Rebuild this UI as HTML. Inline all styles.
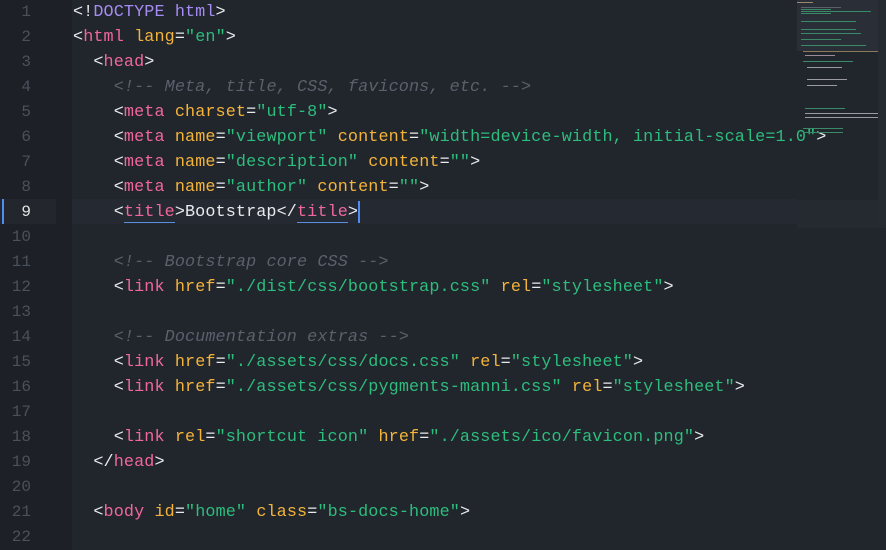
<!DOCTYPE html>
<html><head><style>
body{margin:0;width:886px;height:550px;overflow:hidden;background:#21252c;font-family:"Liberation Mono",monospace;}
#gut{position:absolute;left:0;top:0;width:72px;height:550px;background:#1d2026;}
.ln{position:absolute;left:0;width:31px;text-align:right;color:#4b515c;font-size:16px;height:25px;line-height:25px;}
.cl{position:absolute;left:73px;white-space:pre;font-size:16.8px;letter-spacing:0.11px;height:25px;line-height:25px;color:#e8eaee;}
.t{color:#f0679e}.a{color:#f4b43a}.s{color:#2dbd7d}.d{color:#a48cf2}.c{color:#5a616c;font-style:italic}
#mm{position:absolute;left:797px;top:0;width:89px;height:550px;}
.m{position:absolute;height:1px;}
</style></head><body>
<div id="gut"></div>
<div style="position:absolute;left:0;top:199px;width:56px;height:25px;background:#23262d"></div>
<div style="position:absolute;left:72px;top:199px;width:725px;height:25px;background:#252931"></div>
<div style="position:absolute;left:2px;top:199px;width:2px;height:25px;background:#4d8ef0"></div>
<div class="ln" style="top:0px">1</div><div class="ln" style="top:25px">2</div><div class="ln" style="top:50px">3</div><div class="ln" style="top:75px">4</div><div class="ln" style="top:100px">5</div><div class="ln" style="top:125px">6</div><div class="ln" style="top:150px">7</div><div class="ln" style="top:175px">8</div><div class="ln" style="top:200px;color:#e6e6e6">9</div><div class="ln" style="top:225px">10</div><div class="ln" style="top:250px">11</div><div class="ln" style="top:275px">12</div><div class="ln" style="top:300px">13</div><div class="ln" style="top:325px">14</div><div class="ln" style="top:350px">15</div><div class="ln" style="top:375px">16</div><div class="ln" style="top:400px">17</div><div class="ln" style="top:425px">18</div><div class="ln" style="top:450px">19</div><div class="ln" style="top:475px">20</div><div class="ln" style="top:500px">21</div><div class="ln" style="top:525px">22</div>
<div class="cl" style="top:0px">&lt;!<span class="d">DOCTYPE html</span>&gt;</div>
<div class="cl" style="top:25px">&lt;<span class="t">html</span> <span class="a">lang</span>=<span class="s">"en"</span>&gt;</div>
<div class="cl" style="top:50px">  &lt;<span class="t">head</span>&gt;</div>
<div class="cl" style="top:75px">    <span class="c">&lt;!-- Meta, title, CSS, favicons, etc. --&gt;</span></div>
<div class="cl" style="top:100px">    &lt;<span class="t">meta</span> <span class="a">charset</span>=<span class="s">"utf-8"</span>&gt;</div>
<div class="cl" style="top:125px">    &lt;<span class="t">meta</span> <span class="a">name</span>=<span class="s">"viewport"</span> <span class="a">content</span>=<span class="s">"width=device-width, initial-scale=1.0"</span>&gt;</div>
<div class="cl" style="top:150px">    &lt;<span class="t">meta</span> <span class="a">name</span>=<span class="s">"description"</span> <span class="a">content</span>=<span class="s">""</span>&gt;</div>
<div class="cl" style="top:175px">    &lt;<span class="t">meta</span> <span class="a">name</span>=<span class="s">"author"</span> <span class="a">content</span>=<span class="s">""</span>&gt;</div>
<div class="cl" style="top:200px">    &lt;<span class="t" style="border-bottom:1px solid #5a8de0">title</span>&gt;Bootstrap&lt;/<span class="t" style="border-bottom:1px solid #5a8de0">title</span>&gt;<span style="display:inline-block;width:2px;height:22px;background:#4d8ef0;vertical-align:middle"></span></div>
<div class="cl" style="top:250px">    <span class="c">&lt;!-- Bootstrap core CSS --&gt;</span></div>
<div class="cl" style="top:275px">    &lt;<span class="t">link</span> <span class="a">href</span>=<span class="s">"./dist/css/bootstrap.css"</span> <span class="a">rel</span>=<span class="s">"stylesheet"</span>&gt;</div>
<div class="cl" style="top:325px">    <span class="c">&lt;!-- Documentation extras --&gt;</span></div>
<div class="cl" style="top:350px">    &lt;<span class="t">link</span> <span class="a">href</span>=<span class="s">"./assets/css/docs.css"</span> <span class="a">rel</span>=<span class="s">"stylesheet"</span>&gt;</div>
<div class="cl" style="top:375px">    &lt;<span class="t">link</span> <span class="a">href</span>=<span class="s">"./assets/css/pygments-manni.css"</span> <span class="a">rel</span>=<span class="s">"stylesheet"</span>&gt;</div>
<div class="cl" style="top:425px">    &lt;<span class="t">link</span> <span class="a">rel</span>=<span class="s">"shortcut icon"</span> <span class="a">href</span>=<span class="s">"./assets/ico/favicon.png"</span>&gt;</div>
<div class="cl" style="top:450px">  &lt;/<span class="t">head</span>&gt;</div>
<div class="cl" style="top:500px">  &lt;<span class="t">body</span> <span class="a">id</span>=<span class="s">"home"</span> <span class="a">class</span>=<span class="s">"bs-docs-home"</span>&gt;</div>
<div id="mm">
<div style="position:absolute;left:0;top:0;width:89px;height:51px;background:#2a2e36"></div>
<div style="position:absolute;left:0;top:200px;width:89px;height:28px;background:#252930"></div>
<div class="m" style="left:0;top:2px;width:16px;background:#a08870"></div>
<div class="m" style="left:4px;top:7px;width:40px;background:#5a616c"></div>
<div class="m" style="left:4px;top:9px;width:30px;background:#3a8a6a"></div>
<div class="m" style="left:4px;top:11px;width:70px;background:#3a8a6a"></div>
<div class="m" style="left:4px;top:13px;width:30px;background:#3a8a6a"></div>
<div class="m" style="left:4px;top:21px;width:55px;background:#3a8a6a"></div>
<div class="m" style="left:4px;top:29px;width:55px;background:#3a8a6a"></div>
<div class="m" style="left:4px;top:33px;width:60px;background:#3a8a6a"></div>
<div class="m" style="left:4px;top:39px;width:40px;background:#3a8a6a"></div>
<div class="m" style="left:4px;top:45px;width:65px;background:#3a8a6a"></div>
<div class="m" style="left:6px;top:51px;width:83px;background:#8a7a5a"></div>
<div class="m" style="left:8px;top:55px;width:30px;background:#9a8a9a"></div>
<div class="m" style="left:6px;top:61px;width:50px;background:#3a8a6a"></div>
<div class="m" style="left:10px;top:67px;width:35px;background:#9a9aa0"></div>
<div class="m" style="left:10px;top:79px;width:40px;background:#9a9aa0"></div>
<div class="m" style="left:10px;top:85px;width:30px;background:#9a9aa0"></div>
<div class="m" style="left:8px;top:108px;width:40px;background:#3a8a6a"></div>
<div class="m" style="left:8px;top:113px;width:80px;background:#9a9aa0"></div>
<div class="m" style="left:8px;top:117px;width:80px;background:#9a9aa0"></div>
<div class="m" style="left:6px;top:128px;width:40px;background:#3a8a6a"></div>
<div class="m" style="left:6px;top:132px;width:40px;background:#3a8a6a"></div>
</div>
<div style="position:absolute;left:878px;top:0;width:8px;height:225px;background:#262a31"></div>
</body></html>
